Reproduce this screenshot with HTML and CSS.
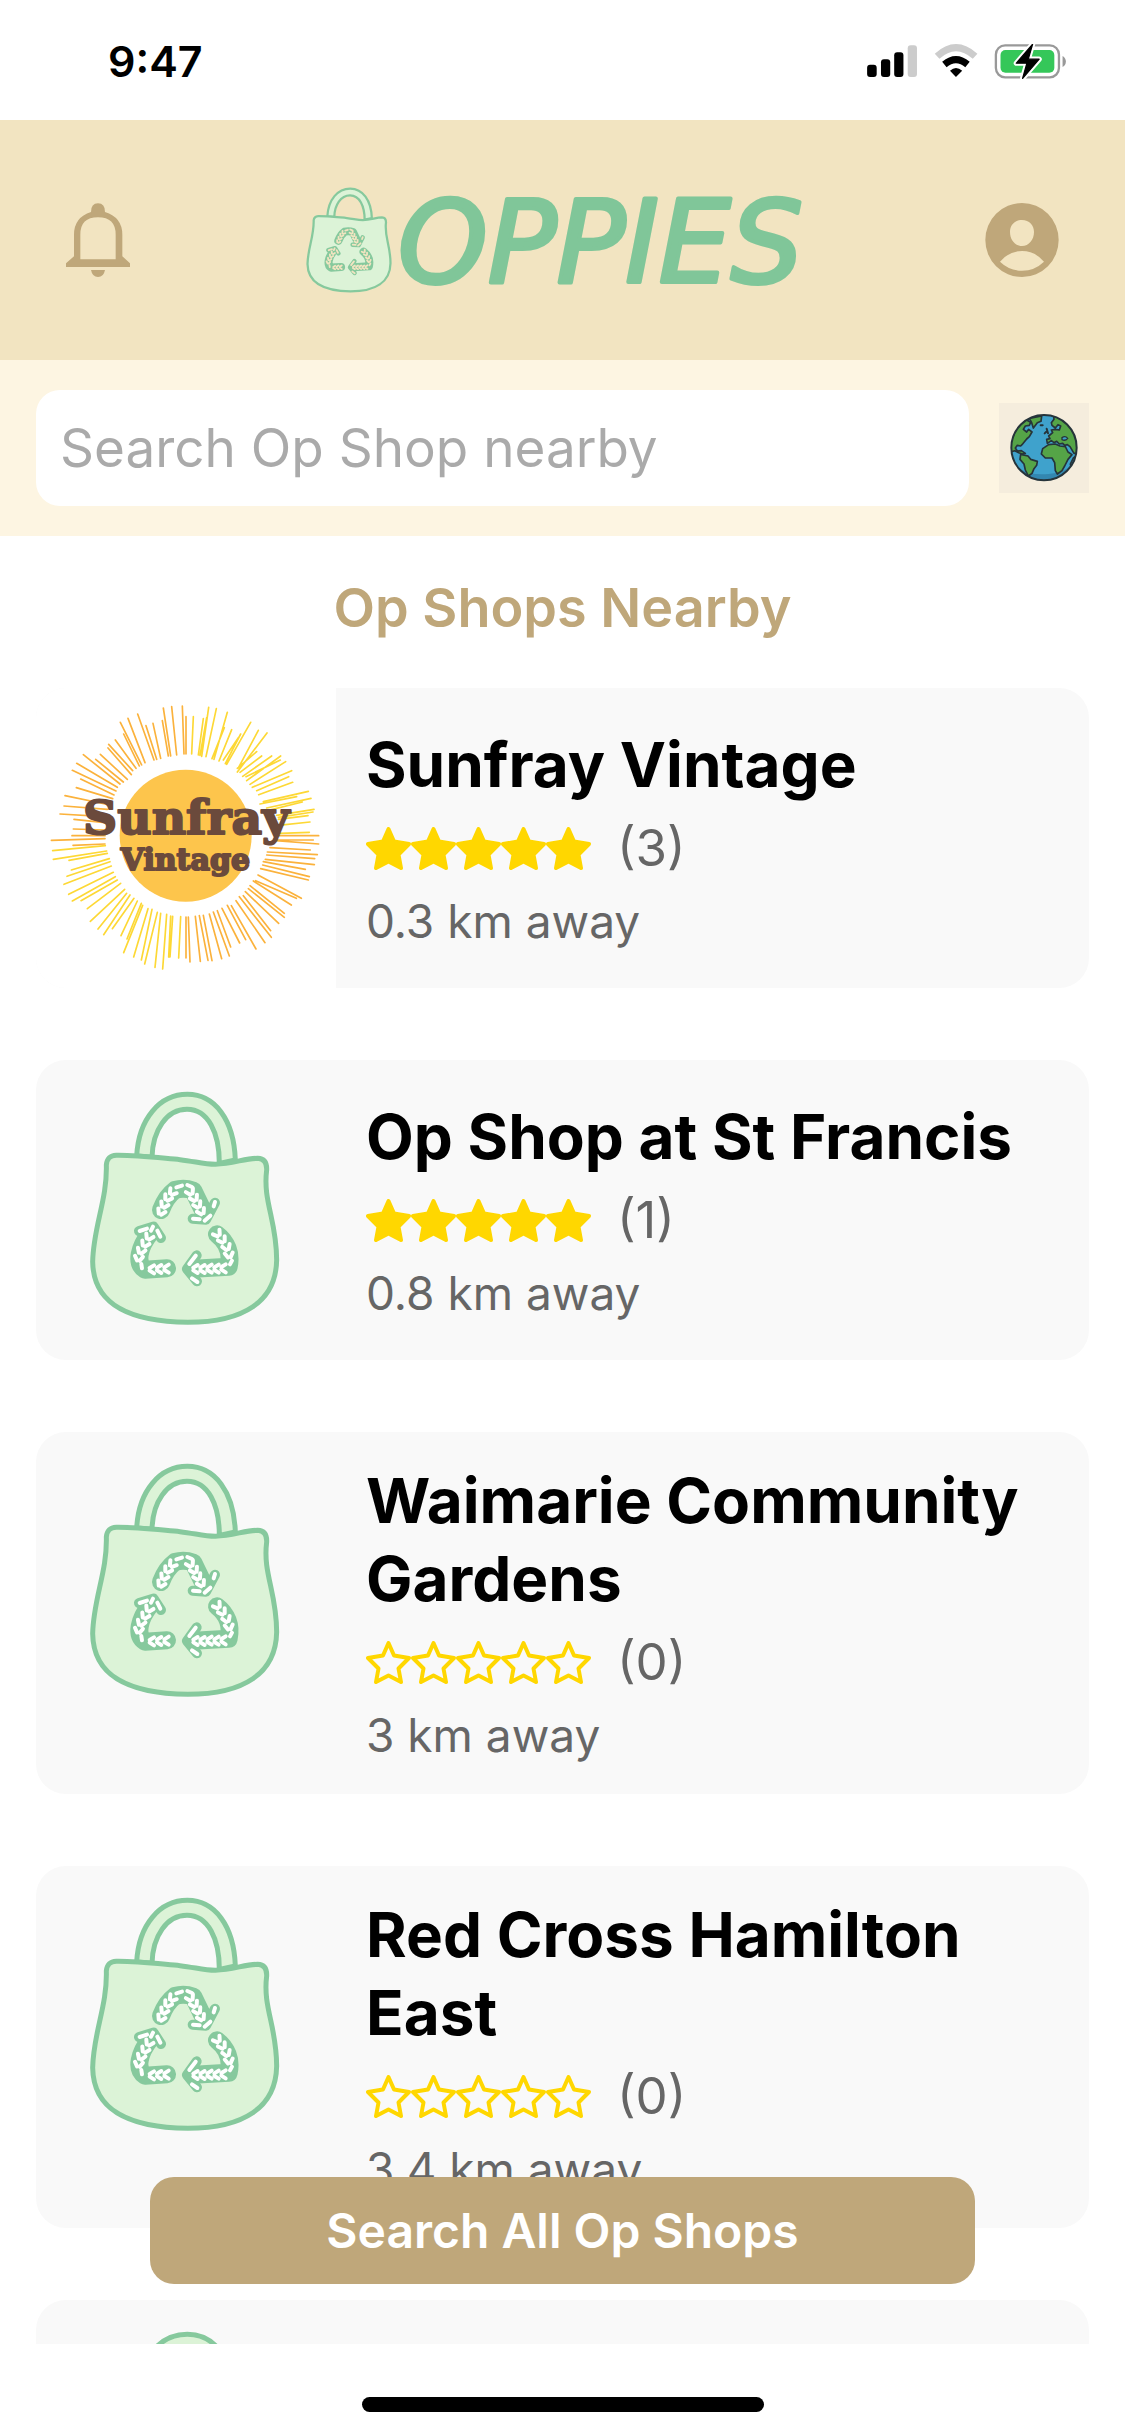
FILE: index.html
```html
<!DOCTYPE html>
<html lang="en">

<head>
    <meta charset="UTF-8">
    <meta name="viewport" content="width=device-width, initial-scale=1">
    <title>Oppies</title>
    <link rel="stylesheet" href="styles.css">
</head>

<body>
    <!-- shared shapes -->
    <svg class="defs" aria-hidden="true">
        <symbol id="star" viewBox="0 0 45 43">
            <path d="M22.500 2 L28 14.500 L43 17 L32.500 27.500 L35 41 L22.500 34.500 L10 41 L12.500 27.500 L2 17 L17 14.500 Z" />
        </symbol>
        <g id="leaf">
            <path d="M-4 7L-12 -6M4 7L12 -6" />
        </g>
        <g id="bag">
            <g fill="#dcf3d7" stroke="#86c99d" stroke-width="15" stroke-linejoin="round">
                <path d="M320 318C326 205 390 133 472 133C555 133 612 210 616 330L568 340C568 250 535 178 471 178C410 178 368 240 366 322Z" />
                <path d="M259 316C320 315 400 325 450 329C495 334 520 343 556 343C610 341 645 325 683 325C702 326 711 338 710 360C698 455 740 510 740 630C738 755 640 817 474 817C300 815 190 765 188 635C190 530 232 450 229 345C231 325 240 317 259 316Z" />
            </g>
            <g fill="none" stroke="#86c99d" stroke-linecap="round" stroke-linejoin="round">
                <g stroke-width="54">
                    <path d="M393 480Q408 440 435 420Q462 412 490 422L522 488" />
                    <path d="M411 655L345 659C315 640 328 590 360 550" />
                    <path d="M561 553C590 575 605 610 596 650L492 656" />
                </g>
                <path stroke-width="30" d="M488 506L528 509L555 458" />
                <path stroke-width="30" d="M327 543L371 530L393 564" />
                <path stroke-width="30" d="M500 616L471 657L501 694" />
            </g>
            <g fill="none" stroke="currentColor" stroke-width="12" stroke-linecap="round">
                <use href="#leaf" transform="translate(393 486) rotate(27)" />
                <use href="#leaf" transform="translate(402 465) rotate(27)" />
                <use href="#leaf" transform="translate(413 444) rotate(32)" />
                <use href="#leaf" transform="translate(427 427) rotate(38)" />
                <path d="M439 412L456 407M472 405L486 411" />
                <use href="#leaf" transform="translate(481 426) rotate(-28)" />
                <use href="#leaf" transform="translate(493 445) rotate(-28)" />
                <use href="#leaf" transform="translate(503 465) rotate(-28)" />
                <use href="#leaf" transform="translate(514 485) rotate(-28)" />
                <path d="M489 506L509 508M524 512L541 497M555 456L551 469" />
                <use href="#leaf" transform="translate(410 656) rotate(90)" />
                <use href="#leaf" transform="translate(388 657) rotate(90)" />
                <use href="#leaf" transform="translate(366 658) rotate(90)" />
                <path d="M336 655L334 642" />
                <use href="#leaf" transform="translate(326 625) rotate(8)" />
                <use href="#leaf" transform="translate(333 603) rotate(20)" />
                <use href="#leaf" transform="translate(345 582) rotate(26)" />
                <use href="#leaf" transform="translate(357 561) rotate(26)" />
                <path d="M329 543L351 536M369 530L363 542M382 542L391 560" />
                <use href="#leaf" transform="translate(562 551) rotate(-35)" />
                <use href="#leaf" transform="translate(577 570) rotate(-32)" />
                <use href="#leaf" transform="translate(590 592) rotate(-22)" />
                <use href="#leaf" transform="translate(597 615) rotate(-8)" />
                <path d="M606 632L600 643" />
                <use href="#leaf" transform="translate(581 655) rotate(90)" />
                <use href="#leaf" transform="translate(560 656) rotate(90)" />
                <use href="#leaf" transform="translate(539 656) rotate(90)" />
                <use href="#leaf" transform="translate(518 657) rotate(90)" />
                <use href="#leaf" transform="translate(497 657) rotate(90)" />
                <path d="M497 617L478 642M486 685L502 696" />
            </g>
        </g>
    </svg>

    <div class="app">
        <div class="status">
            <span class="time">9:47</span>
            <svg class="status-icons" viewBox="48 71 604 106" aria-hidden="true">
                <rect x="49" y="134" width="29" height="37" rx="9" />
                <rect x="91" y="117" width="28" height="54" rx="9" />
                <rect x="131" y="96" width="28" height="75" rx="9" />
                <rect x="172" y="75" width="28" height="96" rx="9" fill="#ccc" />
                <g fill="none" stroke-width="21">
                    <path d="M261 108Q318 56 376 108" stroke="#ccc" />
                    <path d="M283 133Q318 104 353 133" stroke="#000" />
                </g>
                <path d="M300 152Q318 136 337 152L318 171Z" />
                <rect x="439" y="75" width="191" height="97" rx="28" fill="#fff" stroke="#999" stroke-width="7" />
                <rect x="453" y="89" width="163" height="69" rx="15" fill="#35c759" />
                <path d="M641 107Q651 113 651 124Q651 135 641 141Z" fill="#999" />
                <path d="M550 72L501 129H533L520 175L570 117H537Z" stroke="#fff" stroke-width="16" stroke-linejoin="round" />
                <path d="M550 72L501 129H533L520 175L570 117H537Z" stroke="#000" stroke-width="4" stroke-linejoin="round" />
            </svg>
        </div>

        <header class="header">
            <button class="icon-btn" type="button" aria-label="Notifications">
                <svg class="bell" viewBox="51 45 192 222">
                    <path fill-rule="evenodd" d="M126 72Q126 46 147 46Q168 46 168 72Q220 88 220 140V205L243 226V237H51V226L75 205V140Q75 88 126 72ZM94 214H200V140Q200 88 147 88Q94 88 94 140Z" />
                    <path d="M126 246H168Q164 267 147 267Q130 267 126 246Z" />
                </svg>
            </button>
            <svg class="logo" viewBox="0 0 504 106" role="img" aria-label="Oppies">
                <svg width="86" height="106" viewBox="178 123 572 704">
                    <use href="#bag" />
                </svg>
                <text class="logo-text" x="92" y="95">OPPIES</text>
            </svg>
            <button class="icon-btn" type="button" aria-label="Profile">
                <svg class="avatar" viewBox="49 39 220 222">
                    <path fill-rule="evenodd" d="M159 39A110 111 0 1 1 159 261A110 111 0 1 1 159 39ZM159 90C137 90 123 106 123 126C123 149 138 168 159 168C180 168 195 149 195 126C195 106 181 90 159 90ZM93 215Q121 242 159 242Q197 242 225 215Q198 183 159 183Q120 183 93 215Z" />
                </svg>
            </button>
        </header>

        <form class="search">
            <input class="search-input" type="text" placeholder="Search Op Shop nearby" aria-label="Search Op Shop nearby">
            <button class="globe-btn" type="button" aria-label="Map">
                <svg class="globe" viewBox="57 39 270 270">
                    <clipPath id="world"><circle cx="192" cy="173" r="98" /></clipPath>
                    <circle cx="192" cy="173" r="98" fill="#3fa2cc" />
                    <g clip-path="url(#world)">
                        <path d="M110 230Q150 258 205 252Q250 250 290 215V290H110Z" fill="#3387b0" />
                        <g fill="#55a447" stroke="#26343a" stroke-width="5" stroke-linejoin="round">
                            <path d="M80 190L122 80L152 97L148 106L136 108L130 118L140 126L146 118L156 126L148 140L140 147L126 164L122 168L112 166L106 174L112 183L124 182L136 190L128 192L116 188L104 182Z" />
                            <path d="M148 85L185 78L183 94L172 98L160 114L155 98Z" />
                            <path d="M122 193L144 198L152 208L172 214L170 226L162 236L156 250L145 258L136 240L132 222L120 208Z" />
                            <path d="M220 70L300 90V190L282 190L270 170L262 164L254 166L248 160L238 162L230 154L222 158L214 152L202 160L200 148L210 146L206 138L218 128L214 120L226 118L238 120L242 108L234 104L226 114L216 106L214 98L222 88Z" />
                            <path d="M206 164L226 162L240 168L256 170L264 186L276 194L264 208L254 228L246 242L232 252L226 242L224 218L216 204L196 204L184 192L188 176Z" />
                            <path d="M271 222L280 204L300 190V220L276 240Z" fill="#3387b0" />
                        </g>
                        <path d="M246 143Q256 136 263 145Q256 154 246 149Z" fill="#3fa2cc" stroke="#26343a" stroke-width="4" />
                        <path d="M194 130L198 126M200 116L204 130M182 106H188" fill="none" stroke="#26343a" stroke-width="6" stroke-linecap="round" />
                    </g>
                    <circle cx="192" cy="173" r="98" fill="none" stroke="#26343a" stroke-width="6" />
                </svg>
            </button>
        </form>

        <main class="main">
            <h1 class="title">Op Shops Nearby</h1>
            <ul class="shops">
                <li>
                    <a class="card" href="#">
                        <svg class="photo white" viewBox="18 24 900 900" role="img" aria-label="Sunfray Vintage logo">
                            <circle cx="467" cy="467" r="198" fill="#fdc54c" />
                            <g class="rays">
                                <path stroke="#fbb23c" d="M457 78L462 222M468 110V222M425 80L440 225M400 84L422 228M397 122L415 228M369 130L392 235M348 137L380 238M323 102L372 240M294 115L345 248M271 127L335 255M281 162L328 258M256 180L318 265M236 193L308 272M234 204L304 284M211 223L292 298M197 238L280 306M160 224L270 312M140 250L262 322M127 271L258 333M152 297L252 345M139 323L248 356M105 347L240 375M102 378L232 388M90 402L225 410M132 418L225 428M130 447L225 450M126 467H225M64 481L225 476M129 496L225 492" />
                                <path stroke="#fdd835" d="M68 512L226 497M70 538L230 513M117 541L232 520M124 570L238 536M111 589L240 545M102 613L244 558M116 643L250 577M127 663L256 590M153 662L262 600M172 686L272 610M181 724L284 628M204 747L290 640M221 764L300 645M247 746L312 655M273 767L322 663M291 777L334 670M281 818L338 676M311 831L354 686M334 840L366 688M344 852L382 697M375 862L392 700M398 867L410 703M416 831L422 708M428 709L420 831M446 834L452 710" />
                                <path stroke="#fbb23c" d="M468 834V711M480 846L475 711M511 844L496 709M534 841L508 707M546 842L520 706M575 836L538 702M598 828L550 696M602 801L562 692M629 789L576 685M647 779L592 676M678 807L604 677M705 788L618 662M724 772L628 650M722 752L640 647M746 730L646 635M763 712L655 626M763 700L660 617M784 675L670 603M799 655L677 602M814 655L684 585M835 600L692 566M838 590L698 555M826 568L700 545M853 554L706 538M854 536L710 525M862 524L712 516M841 510L720 503M866 492L738 482M850 480L738 480M866 467H748" />
                                <path stroke="#fdd835" d="M838 457L750 460M840 426L745 436M834 407L745 418M852 388L740 406M849 396L745 412M843 355L710 384M835 334L700 365M800 350L690 372M817 366L700 395M788 307L686 344M776 290L680 332M785 272L667 322M767 245L660 313M752 228L650 302M751 240L648 290M725 228L638 289M695 228L630 277M711 159L622 276M685 151L625 264M680 215L622 265M662 127L590 253M632 162L586 251M626 172L580 240M605 149L567 243M592 97L552 238M583 143L546 236M559 86L528 230M536 82L515 229M530 113L510 226M520 116L505 225M490 110L485 222" />
                            </g>
                            <g class="sun-text">
                                <text x="469" y="462" font-size="142">Sunfray</text>
                                <text x="466" y="571" font-size="90">Vintage</text>
                            </g>
                        </svg>
                        <div class="info">
                            <h2 class="name">Sunfray Vintage</h2>
                            <div class="rating">
                                <span class="stars full" role="img" aria-label="5 stars">
                                    <svg><use href="#star" /></svg><svg><use href="#star" /></svg><svg><use href="#star" /></svg><svg><use href="#star" /></svg><svg><use href="#star" /></svg>
                                </span>
                                <span class="count">(3)</span>
                            </div>
                            <p class="distance">0.3 km away</p>
                        </div>
                    </a>
                </li>
                <li>
                    <a class="card" href="#">
                        <svg class="photo" viewBox="18 30 900 900" aria-hidden="true"><use href="#bag" /></svg>
                        <div class="info">
                            <h2 class="name">Op Shop at St Francis</h2>
                            <div class="rating">
                                <span class="stars full" role="img" aria-label="5 stars">
                                    <svg><use href="#star" /></svg><svg><use href="#star" /></svg><svg><use href="#star" /></svg><svg><use href="#star" /></svg><svg><use href="#star" /></svg>
                                </span>
                                <span class="count">(1)</span>
                            </div>
                            <p class="distance">0.8 km away</p>
                        </div>
                    </a>
                </li>
                <li>
                    <a class="card" href="#">
                        <svg class="photo" viewBox="18 30 900 900" aria-hidden="true"><use href="#bag" /></svg>
                        <div class="info">
                            <h2 class="name">Waimarie Community Gardens</h2>
                            <div class="rating">
                                <span class="stars" role="img" aria-label="0 stars">
                                    <svg><use href="#star" /></svg><svg><use href="#star" /></svg><svg><use href="#star" /></svg><svg><use href="#star" /></svg><svg><use href="#star" /></svg>
                                </span>
                                <span class="count">(0)</span>
                            </div>
                            <p class="distance">3 km away</p>
                        </div>
                    </a>
                </li>
                <li>
                    <a class="card" href="#">
                        <svg class="photo" viewBox="18 30 900 900" aria-hidden="true"><use href="#bag" /></svg>
                        <div class="info">
                            <h2 class="name">Red Cross Hamilton East</h2>
                            <div class="rating">
                                <span class="stars" role="img" aria-label="0 stars">
                                    <svg><use href="#star" /></svg><svg><use href="#star" /></svg><svg><use href="#star" /></svg><svg><use href="#star" /></svg><svg><use href="#star" /></svg>
                                </span>
                                <span class="count">(0)</span>
                            </div>
                            <p class="distance">3.4 km away</p>
                        </div>
                    </a>
                </li>
                <li>
                    <a class="card" href="#" aria-label="Next op shop">
                        <svg class="photo" viewBox="18 30 900 900" aria-hidden="true"><use href="#bag" /></svg>
                    </a>
                </li>
            </ul>
            <button class="search-all" type="button">Search All Op Shops</button>
        </main>

        <div class="home"><span class="home-bar"></span></div>
    </div>
</body>

</html>
```
FILE: styles.css
```css
* {
    box-sizing: border-box;
}

body,
h1,
h2,
p,
ul {
    margin: 0;
    padding: 0;
}

body,
button,
input {
    font-family: Inter, "Liberation Sans", sans-serif;
}

body {
    background: #fff;
    color: #000;
}

ul {
    list-style: none;
}

a {
    color: inherit;
    text-decoration: none;
}

button {
    border: 0;
    padding: 0;
    background: none;
    cursor: pointer;
}

svg {
    display: block;
}

.defs {
    position: absolute;
    width: 0;
    height: 0;
}

.app {
    display: flex;
    flex-direction: column;
    height: 100vh;
}

/* status bar */
.status {
    display: flex;
    flex: none;
    align-items: center;
    justify-content: space-between;
    height: 120px;
    padding: 2px 58px 0 108px;
}

.time {
    font-size: 43px;
    font-weight: 600;
}

.status-icons {
    width: 201px;
    height: 35px;
}

/* header */
.header {
    display: flex;
    flex: none;
    align-items: center;
    justify-content: space-between;
    height: 240px;
    padding: 0 66px;
    background: #f2e4c1;
}

.icon-btn {
    fill: #bfa77a;
}

.bell {
    width: 64px;
    height: 74px;
}

.avatar {
    width: 74px;
    height: 74px;
}

.logo {
    width: 504px;
    height: 106px;
    color: #f2e4c1;
    overflow: visible;
}

.logo-text {
    fill: #80c699;
    stroke: #80c699;
    stroke-width: 4px;
    stroke-linejoin: round;
    font-family: "DejaVu Sans", sans-serif;
    font-size: 114px;
    font-style: italic;
    font-weight: 400;
}

/* search */
.search {
    display: flex;
    flex: none;
    align-items: center;
    gap: 30px;
    padding: 30px 36px;
    background: #fdf5e2;
}

.search-input {
    flex: 1;
    min-width: 0;
    height: 116px;
    padding: 0 24px;
    border: 0;
    border-radius: 24px;
    background: #fff;
    color: #000;
    font-size: 53px;
    outline: none;
}

.search-input::placeholder {
    color: #aaa;
    opacity: 1;
}

.globe {
    width: 90px;
    height: 90px;
    background: #f5eddd;
}

/* shop list */
.main {
    position: relative;
    flex: 1;
    min-height: 0;
    overflow: hidden;
}

.title {
    padding: 36px 36px 44px;
    color: #bfa77a;
    font-size: 54px;
    font-weight: 600;
    line-height: 72px;
    text-align: center;
}

.shops {
    display: flex;
    flex-direction: column;
    gap: 72px;
    padding: 0 36px;
}

.card {
    display: flex;
    min-height: 300px;
    border-radius: 30px;
    background: #f9f9f9;
    overflow: hidden;
}

.photo {
    flex: none;
    width: 300px;
    height: 300px;
    color: #fff;
}

.white {
    background: #fff;
}

.rays {
    fill: none;
    stroke-width: 5px;
    stroke-linecap: round;
}

.sun-text {
    fill: #6b4a3c;
    stroke: #6b4a3c;
    stroke-width: 6px;
    stroke-linejoin: round;
    font-family: "DejaVu Serif", serif;
    font-weight: 700;
    text-anchor: middle;
}

.info {
    flex: 1;
    align-self: center;
    padding: 30px;
}

.name {
    font-size: 62px;
    font-weight: 700;
    line-height: 78px;
}

.rating {
    display: flex;
    align-items: center;
    gap: 26px;
    padding: 12px 0;
}

.stars {
    display: flex;
    fill: none;
    stroke: #ffd700;
    stroke-width: 4px;
    stroke-linejoin: round;
}

.stars svg {
    width: 45px;
    height: 43px;
}

.full {
    fill: #ffd700;
}

.count {
    color: #666;
    font-size: 51px;
    line-height: 64px;
}

.distance {
    color: #666;
    font-size: 46px;
    line-height: 58px;
}

.search-all {
    position: absolute;
    right: 150px;
    bottom: 60px;
    left: 150px;
    height: 107px;
    border-radius: 24px;
    background: #bfa77a;
    color: #fff;
    font-size: 48px;
    font-weight: 600;
}

.home {
    display: flex;
    flex: none;
    align-items: flex-end;
    justify-content: center;
    height: 92px;
    padding-bottom: 24px;
}

.home-bar {
    width: 402px;
    height: 15px;
    border-radius: 8px;
    background: #000;
}
```
